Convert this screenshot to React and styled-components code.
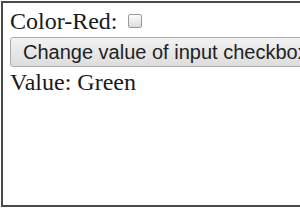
import React, { useState } from "react";
import styled, { createGlobalStyle } from "styled-components";

const GlobalStyle = createGlobalStyle`
    html, body {
        margin: 0;
        padding: 0;
        background: #ffffff;
        overflow: hidden;
    }
`;

const Frame = styled.div`
    box-sizing: border-box;
    margin: 1px 0 0 1px;
    width: 299px;
    height: 206px;
    overflow: hidden;
    border: 2px solid #4a4a4a;
    border-right: none;
    padding: 4px 0 0 7px;
    font-family: "Liberation Serif", "Times New Roman", serif;
    font-size: 24px;
    color: #1a1a1a;
    background: #fff;
`;

const Row = styled.div`
    display: flex;
    align-items: center;
    height: 28px;
    line-height: 28px;
`;

const Box = styled.input`
    appearance: none;
    box-sizing: border-box;
    width: 14px;
    height: 14px;
    margin: 0 0 0 10px;
    border: 1px solid #9a9a9a;
    border-radius: 2px;
    background: linear-gradient(#fcfcfc, #dcdcdc);
    &:checked {
        background: #3b78e7;
    }
`;

const Button = styled.button`
    display: block;
    box-sizing: border-box;
    margin-top: 2px;
    height: 30px;
    width: 320px;
    padding: 0 0 0 12px;
    text-align: left;
    white-space: nowrap;
    font-family: "Liberation Sans", Arial, sans-serif;
    font-size: 20px;
    color: #222;
    border: 1px solid #acacac;
    border-radius: 3px;
    background: linear-gradient(#f2f2f2, #dddddd);
`;

const Output = styled.div`
    height: 30px;
    line-height: 30px;
`;

export default function App() {
    const [red, setRed] = useState(false);
    const [value, setValue] = useState("Green");

    return (
        <>
            <GlobalStyle />
            <Frame>
                <Row>
                    Color-Red:
                    <Box
                        type="checkbox"
                        checked={red}
                        onChange={e => setRed(e.target.checked)}
                    />
                </Row>
                <Button onClick={() => setValue(value === "Green" ? "Red" : "Green")}>
                    Change value of input checkbox
                </Button>
                <Output>Value: {value}</Output>
            </Frame>
        </>
    );
}
